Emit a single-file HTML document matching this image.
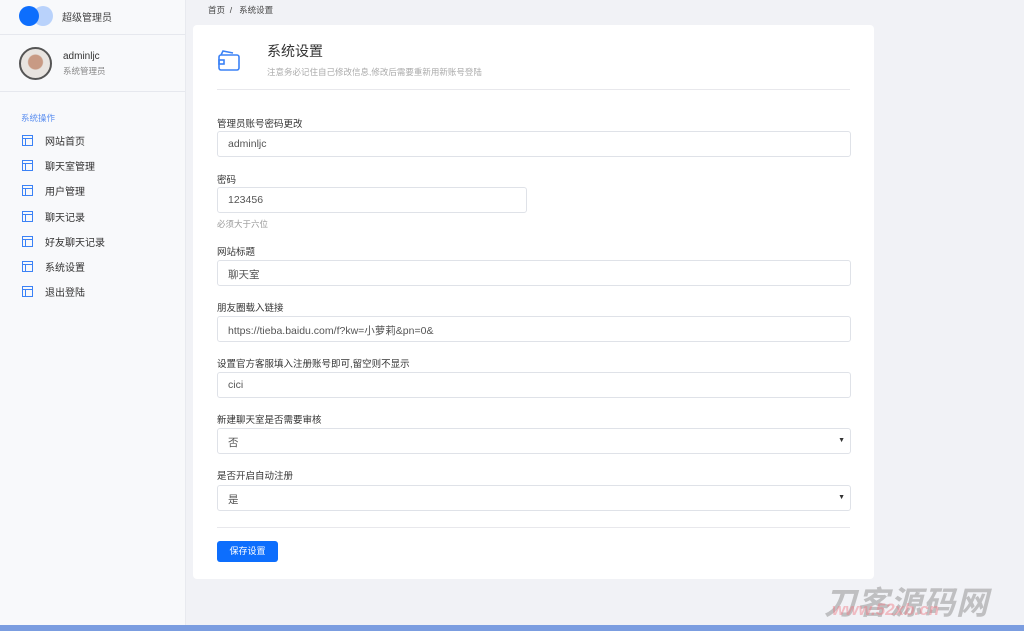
<!DOCTYPE html>
<html><head><meta charset="utf-8"><style>
*{box-sizing:border-box;margin:0;padding:0}
body{width:1024px;height:631px;overflow:hidden;background:#f1f2f6;font-family:"Liberation Sans","Noto Sans CJK SC",sans-serif;position:relative;color:#333}
.side{position:absolute;left:0;top:0;width:186px;height:625px;background:#f8f9fb;border-right:1px solid #e8eaef}
.logo{height:35px;border-bottom:1px solid #e6e8ee;position:relative}
.c1{position:absolute;left:19px;top:6px;width:20px;height:20px;border-radius:50%;background:#0d6efd}
.c2{position:absolute;left:33px;top:6px;width:20px;height:20px;border-radius:50%;background:#b9d2fb}
.logo span{position:absolute;left:62px;top:9px;font-size:10px;color:#444}
.user{height:57px;border-bottom:1px solid #e6e8ee;position:relative}
.av{position:absolute;left:19px;top:12px;width:33px;height:33px;border-radius:50%;border:2px solid #555;background:radial-gradient(circle at 50% 45%,#c89a84 0 7px,#e8e4e0 8px)}
.un{position:absolute;left:63px;top:16px;font-size:10px;color:#333}
.ur{position:absolute;left:63px;top:30px;font-size:8.5px;color:#888}
.sec{position:absolute;left:21px;top:112px;font-size:8.5px;color:#5a8ef0}
.nav{position:absolute;left:22px;top:133px}
.nav div{height:25.2px;font-size:10px;color:#333;display:flex;align-items:flex-start}
.nav i{display:inline-block;width:11px;height:11px;border:1.5px solid #3b82f6;margin-right:12px;margin-top:2px;position:relative}
.nav i:before{content:"";position:absolute;left:0;right:0;top:2px;border-top:1.5px solid #3b82f6}
.nav i:after{content:"";position:absolute;left:2px;top:3px;bottom:0;border-left:1.5px solid #3b82f6}
.bc{position:absolute;left:208px;top:4px;font-size:8.5px;color:#444}
.card{position:absolute;left:193px;top:25px;width:681px;height:554px;background:#fff;border-radius:4px}
.h1{position:absolute;left:74px;top:16px;font-size:14px;color:#333}
.h2{position:absolute;left:74px;top:41px;font-size:8.5px;color:#aaa}
.hr{position:absolute;left:24px;right:24px;height:1px;background:#e8e8ec}
.lab{position:absolute;left:24px;font-size:9.5px;color:#333}
.in{position:absolute;left:24px;width:634px;height:26px;border:1px solid #dfe2e8;border-radius:3px;font-size:10.5px;color:#555;padding:6px 10px}
.help{position:absolute;left:24px;font-size:8.5px;color:#999}
.arr{position:absolute;right:5px;top:8px;font-size:7px;color:#333}
.btn{position:absolute;left:24px;top:516px;width:61px;height:21px;background:#0d6efd;color:#fff;border-radius:3px;font-size:9px;text-align:center;line-height:21px}
.bar{position:absolute;left:0;bottom:0;width:1024px;height:6px;background:#7b9de0}
.wm{position:absolute;left:824px;top:578px;font-size:32px;font-style:italic;font-weight:bold;color:rgba(150,150,150,.55);letter-spacing:1px}
.wm2{position:absolute;left:832px;top:600px;font-size:17px;font-style:italic;font-weight:bold;color:rgba(240,120,130,.45)}
</style></head><body>
<div class="side">
<div class="logo"><div class="c2"></div><div class="c1"></div><span>超级管理员</span></div>
<div class="user"><div class="av"></div><div class="un">adminljc</div><div class="ur">系统管理员</div></div>
<div class="sec">系统操作</div>
<div class="nav">
<div><i></i>网站首页</div><div><i></i>聊天室管理</div><div><i></i>用户管理</div><div><i></i>聊天记录</div><div><i></i>好友聊天记录</div><div><i></i>系统设置</div><div><i></i>退出登陆</div>
</div></div>
<div class="bc">首页 &nbsp;/ &nbsp; 系统设置</div>
<div class="card">
<svg style="position:absolute;left:24px;top:24px" width="24" height="24" viewBox="0 0 24 24" fill="none" stroke="#3b82f6" stroke-width="1.6"><rect x="2" y="6" width="20" height="15" rx="2"/><path d="M4 6 L6 2 L16 4"/><rect x="2" y="11" width="5" height="4"/></svg>
<div class="h1">系统设置</div>
<div class="h2">注意务必记住自己修改信息,修改后需要重新用新账号登陆</div>
<div class="hr" style="top:64px"></div>
<div class="lab" style="top:91px">管理员账号密码更改</div>
<div class="in" style="top:106px">adminljc</div>
<div class="lab" style="top:147px">密码</div>
<div class="in" style="top:162px;width:310px">123456</div>
<div class="help" style="top:193px">必须大于六位</div>
<div class="lab" style="top:219px">网站标题</div>
<div class="in" style="top:235px">聊天室</div>
<div class="lab" style="top:275px">朋友圈载入链接</div>
<div class="in" style="top:291px">https://tieba.baidu.com/f?kw=小萝莉&amp;pn=0&amp;</div>
<div class="lab" style="top:331px">设置官方客服填入注册账号即可,留空则不显示</div>
<div class="in" style="top:347px">cici</div>
<div class="lab" style="top:387px">新建聊天室是否需要审核</div>
<div class="in" style="top:403px">否<span class="arr">▼</span></div>
<div class="lab" style="top:443px">是否开启自动注册</div>
<div class="in" style="top:460px">是<span class="arr">▼</span></div>
<div class="hr" style="top:502px"></div>
<div class="btn">保存设置</div>
</div>
<div class="wm">刀客源码网</div>
<div class="wm2">www.52xb.cn</div>
<div class="bar"></div>
</body></html>
